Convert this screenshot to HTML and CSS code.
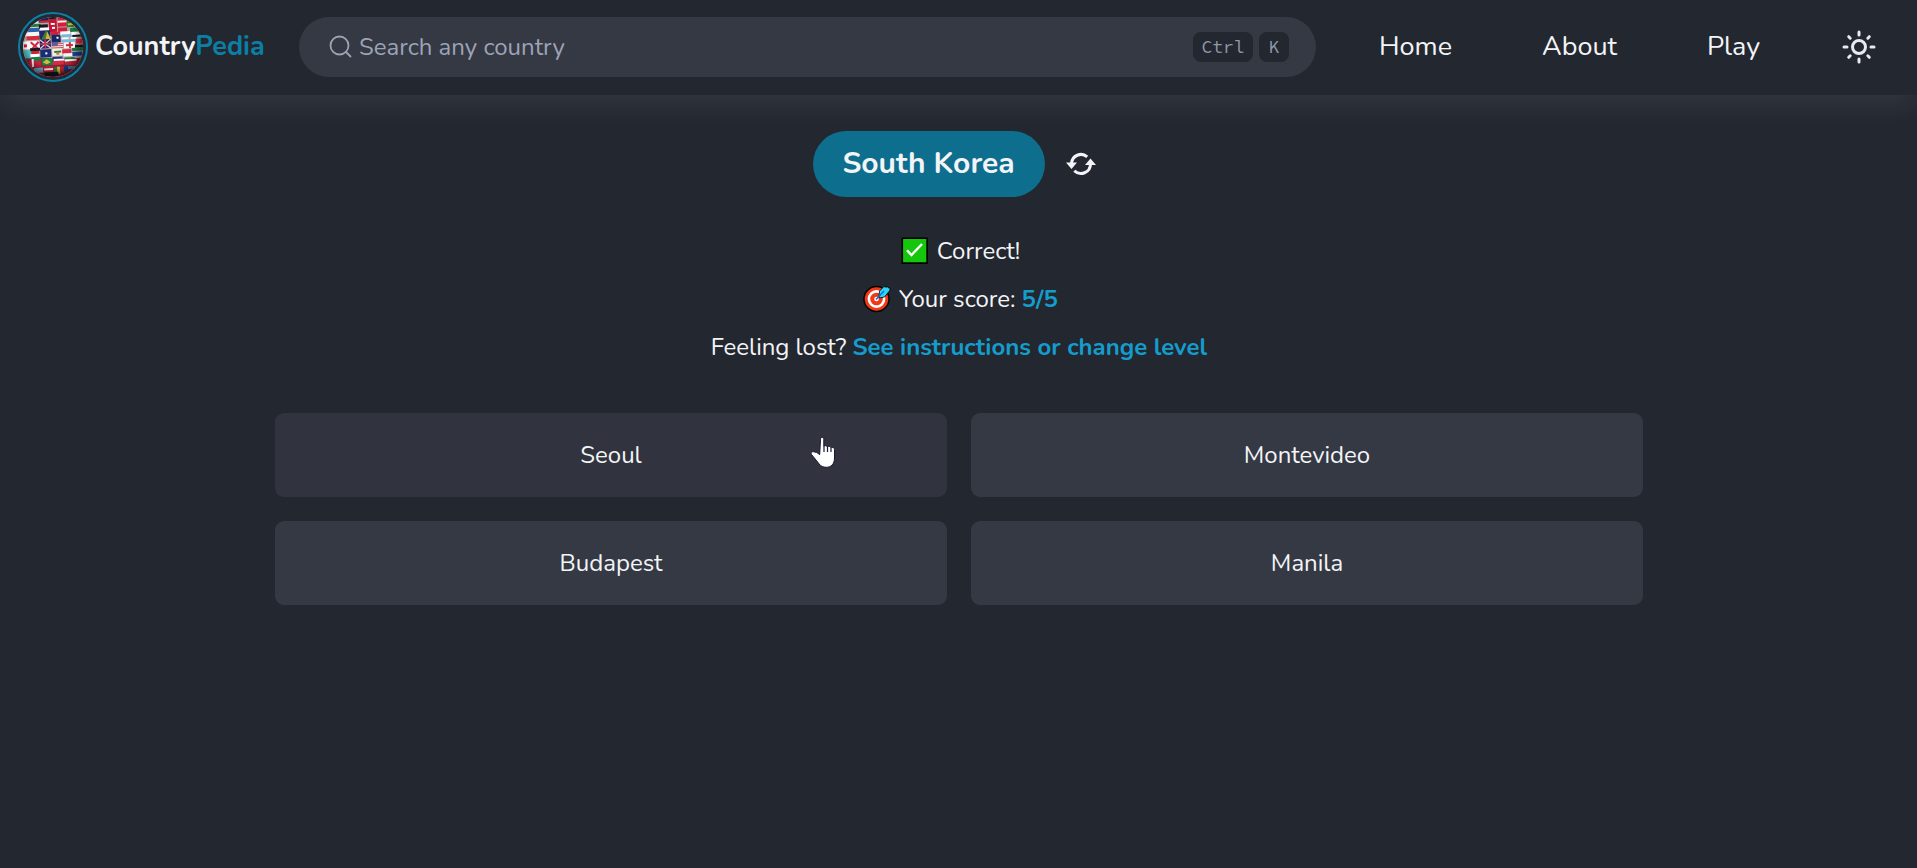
FILE: index.html
```html
<!DOCTYPE html>
<html lang="en">
<head>
<meta charset="utf-8">
<title>CountryPedia</title>
<link rel="stylesheet" href="styles.css">
</head>
<body>
<header class="header">
  <a class="brand">
    <svg class="logo" viewBox="0 0 70 70" width="70" height="70">
      <defs>
        <clipPath id="globe"><circle cx="35" cy="35" r="30"/></clipPath>
        <radialGradient id="shade" cx=".47" cy=".42" r=".56"><stop offset=".72" stop-opacity="0"/><stop offset="1" stop-opacity=".5"/></radialGradient>
      </defs>
      <g clip-path="url(#globe)">
        <path fill="#b9a7a9" d="M0 0h70v70H0z"/>
        <path fill="#8d2238" d="M0 46h70v24H0z"/>
        <g transform="rotate(-3 35 35)">
          <path fill="#dfe3d8" d="M12 7h12v8H12z"/><path fill="#287545" d="M14 11h10v3H14z"/><path fill="#172451" d="M22 5h10v5H22z"/><path fill="#d92335" d="M23 8h9v2h-9z"/>
          <path fill="#c51531" d="M32 7h8v13h-8z"/><path fill="#fff" d="M34 11h4v2h-4zM35 15h3v2h-3z"/><path fill="#151d25" d="M32 5h8v2h-8z"/>
          <path fill="#d51c3b" d="M41 6h9v9h-9z"/><path fill="#f3f3f3" d="M41 9h9v2h-9z"/><path fill="#16833d" d="M50 10h7v6h-7z"/><path fill="#e5c231" d="M51 12h5v2h-5z"/>
          <path fill="#2a63ad" d="M11 15h11v4H11z"/><path fill="#f5f5f5" d="M8 19h14v4H8z"/><path fill="#d72b39" d="M9 23h13v4H9z"/><path fill="#17191f" d="M22 12h9v4h-9z"/><path fill="#fbfbfb" d="M23 15h9v3h-9z"/>
          <path fill="#182d6c" d="M22 18h11v10H22z"/><path fill="#477838" d="m23 28 6-10 5 9z"/><path fill="#d6b337" d="m30 19 3 8h-5z"/>
          <path fill="#d31d3e" d="M33 20h8v3h-8z"/><path fill="#16275f" d="M34 23h9v8h-9z"/><path fill="#fff" d="M39 25h2v2h-2z"/>
          <path fill="#cc2038" d="M41 16h9v6h-9z"/><path fill="#f9f9f9" d="M43 20h10v4H43z"/><path fill="#79b8e0" d="M44 23h15v3H44zM44 28h15v3H44z"/><path fill="#f9f9f9" d="M44 26h15v2H44z"/><path fill="#d6b63d" d="M51 26h2v2h-2z"/>
          <path fill="#147b3b" d="M53 17h9v4h-9z"/><path fill="#fff" d="M54 21h9v3h-9z"/><path fill="#18191c" d="M55 24h9v2h-9z"/><path fill="#d92438" d="M58 28h8v5h-8z"/>
          <path fill="#f7f7f7" d="M4 28h18v8H4z"/><path fill="#c8203b" d="M6 31h3v3H6z"/><path stroke="#ce2942" stroke-width="2" d="m13 29 8 8m0-8-8 8"/>
          <path fill="#1b2566" d="M22 27h11v9H22z"/><path stroke="#d9c6d6" stroke-width="1.300" d="m22 27 11 9m0-9-11 9"/><path stroke="#d42d48" stroke-width="1.500" d="M22 31.500h11M27.500 27v9"/>
          <path fill="#eee" d="M34 31h11v6H34z"/><path stroke="#d54452" stroke-width="1" d="M34 32h11m-11 2h11m-11 2h11"/><path fill="#555f91" d="M34 30h6v4h-6z"/>
          <path fill="#f7f7f7" d="M46 31h11v6H46z"/><path fill="#c72c37" d="M48 33h7v2h-7zM51 31h2v6h-2z"/><path fill="#151a1b" d="M57 34h9v3h-9z"/><path fill="#16743b" d="M54 37h12v3H54z"/>
          <path fill="#4ac0c2" d="M6 37h7v8H6z"/><path fill="#d91c32" d="M13 38h8v3h-8z"/><path fill="#fff" d="M12 41h9v3h-9z"/><path fill="#171b1f" d="M12 35h10v3H12z"/>
          <path fill="#157f45" d="M13 44h9v4h-9z"/><path fill="#192d75" d="M22 37h11v8H22z"/><path fill="#fff" d="M27 40h2v2h-2z"/><path fill="#f3f0dc" d="M34 37h10v7H34z"/><path fill="#39743e" d="M36 39h7v2h-7z"/><path fill="#bb8245" d="M38 41h3v2h-3z"/>
          <path fill="#db2643" d="M44 38h9v4h-9z"/><path fill="#f4f4f4" d="M45 42h10v3H45z"/><path fill="#18429b" d="M54 41h10v4H54z"/>
          <path fill="#cf1e3f" d="M10 48h12v6H10z"/><path fill="#fff" d="M13 46h2v8h-2z"/><path fill="#16813d" d="M23 46h11v7H23z"/><path fill="#d4b940" d="m28 47 4 3-4 2-4-2z"/><path fill="#193889" d="M34 45h10v4H34z"/><path fill="#d72a43" d="M34 49h11v4H34z"/><path fill="#f5f5f5" d="M35 47h11v2H35z"/>
          <path fill="#14803d" d="M46 46h10v3H46z"/><path fill="#dc2138" d="M46 50h12v4H46z"/><path fill="#fff" d="M46 48h12v2H46z"/>
          <path fill="#78aecf" d="M15 55h9v5h-9z"/><path fill="#c71834" d="M24 54h10v6H24z"/><path fill="#f4f4f4" d="M25 56h9v2h-9z"/><path fill="#2e7b3a" d="M35 55h3v7h-3z"/><path fill="#e6c63e" d="M38 55h3v7h-3z"/><path fill="#d52a36" d="M41 55h4v6h-4z"/><path fill="#1a429a" d="M45 54h4v6h-4z"/><path fill="#15191c" d="M25 60h14v4H25z"/><path fill="#4b9bcf" d="M49 55h7v3h-7z"/>
        </g>
        <circle cx="35" cy="35" r="30" fill="url(#shade)"/>
      </g>
      <circle cx="35" cy="35" r="34" fill="none" stroke="#0c7fa5" stroke-width="2"/>
    </svg>
    <span class="brand-name">Country<span class="brand-accent">Pedia</span></span>
  </a>
  <div class="search">
    <svg class="search-icon" viewBox="0 0 24 24" width="24" height="24"><circle cx="10.500" cy="10.500" r="9" fill="none"/><path d="m17 17 4.500 4.500"/></svg>
    <span class="placeholder">Search any country</span>
    <kbd class="key key-ctrl">Ctrl</kbd><kbd class="key">K</kbd>
  </div>
  <nav class="nav"><a class="nav-home">Home</a><a class="nav-about">About</a><a>Play</a></nav>
  <svg class="sun" viewBox="0 0 34 34" width="34" height="34"><circle cx="17" cy="17" r="6.500"/><path d="M17 2v3M17 29v3M2 17h3M29 17h3M6.700 6.700l1.500 1.500M25.800 25.800l1.500 1.500M27.300 6.700l-1.500 1.500M8.200 25.800l-1.500 1.500"/></svg>
</header>
<main class="game">
  <div class="question">
    <h1 class="country">South Korea</h1>
    <svg class="refresh" viewBox="0 0 30 24" width="30" height="24"><path class="arc" d="M5.500 11.500A9.500 9.500 0 0 1 21.200 4.800M24.500 12A9.500 9.500 0 0 1 8.300 18.700"/><path d="M0 10.500h11l-5.500 6.500zM19 13h11l-5.500-6.500z"/></svg>
  </div>
  <div class="status">
    <p class="line line-icon"><svg class="emoji" viewBox="0 0 28 28" width="28" height="28"><path fill="#16c60c" stroke="#000" stroke-width="1.600" d="M1.300 1.300h24.800v24.800H1.300z"/><path fill="none" stroke="#fff" stroke-width="2.400" d="m6 13.200 4.500 4.800L21 7"/></svg><span>Correct!</span></p>
    <p class="line line-icon"><svg class="emoji" viewBox="0 0 28 28" width="28" height="28"><circle cx="13.500" cy="14" r="12.500" fill="#f03a17" stroke="#000" stroke-width="1.500"/><circle cx="13.500" cy="14" r="7.600" fill="none" stroke="#fff" stroke-width="2.600"/><circle cx="13.500" cy="14" r="2.300" fill="#fff"/><path fill="#31d2f7" stroke="#000" stroke-width=".8" d="m16 11 .5-5L21 1.500l2.500.8.5-1.300 1.500 2h1.500v2l-1 1.500-4.500 5.500-5 1z"/><path stroke="#0078d4" stroke-width="1.500" d="m13 14.500 8-8.500"/></svg><span>Your score:</span><b class="score">5/5</b></p>
    <p class="line"><span>Feeling lost?</span><a class="help">See instructions or change level</a></p>
  </div>
  <div class="answers">
    <button class="answer answer-active">Seoul<svg class="pointer" viewBox="0 0 26 32" width="26" height="32"><path d="M10.500 3.200c0-2.300 3.300-2.300 3.300 0v7c1-1 3-.6 3.300.5 1.200-.8 3.300-.4 3.600.8 1.400-.7 3.800-.1 3.800 2V22c0 6-3.400 9.300-8.300 9.300-3 0-5.300-1.100-7-3.300L1.700 18.700c-1.400-1.900-.2-3.300 2-2.900l3 .6 3 2.200z"/><path class="finger" d="M14 10v6M17.500 11v5M21 11.800V16"/></svg></button>
    <button class="answer">Montevideo</button>
    <button class="answer">Budapest</button>
    <button class="answer">Manila</button>
  </div>
</main>
</body>
</html>
```
FILE: styles.css
```css
* { box-sizing: border-box; }
body {
  margin: 0;
  min-height: 868px;
  background: #23272f;
  color: #f3f4f7;
  font: 24px/36px Nunito, Lato, sans-serif;
}
.header {
  display: flex;
  align-items: center;
  height: 95px;
  padding: 0 41px 1px 18px;
  background: #23272f;
  box-shadow: 0 12px 26px -2px rgba(255, 255, 255, .075);
}
.brand { display: flex; align-items: center; width: 281px; gap: 7px; }
.logo { flex: none; }
.brand-name { font-size: 27px; font-weight: 700; white-space: nowrap; }
.brand-accent { color: #0c7fa5; }
.search {
  display: flex;
  align-items: center;
  width: 1017px;
  height: 60px;
  padding: 0 27px 0 30px;
  border-radius: 30px;
  background: #343944;
  color: #9da3b4;
}
.search-icon { fill: none; stroke: #9da3b4; stroke-width: 1.8; stroke-linecap: round; }
.placeholder { flex: 1; margin-left: 6px; font-size: 24px; }
.key {
  min-width: 30px;
  height: 30px;
  border-radius: 8px;
  background: #23272f;
  color: #8f99a9;
  font: 18px/30px "Source Code Pro", "Liberation Mono", monospace;
  text-align: center;
}
.key-ctrl { width: 60px; margin-right: 6px; }
.nav { display: flex; flex: 1; font-size: 27px; padding-left: 63px; }
.nav-home { width: 163px; }
.nav-about { width: 165px; }
.sun { fill: none; stroke: #e9eaf0; stroke-width: 3; stroke-linecap: round; }
.game { padding-top: 36px; }
.question { display: flex; align-items: center; justify-content: center; gap: 21px; padding-right: 9px; }
.country {
  width: 232px;
  height: 66px;
  margin: 0;
  border-radius: 33px;
  background: #0d6e8e;
  font-size: 30px;
  line-height: 66px;
  text-align: center;
}
.refresh { fill: #f3f4f7; }
.arc { fill: none; stroke: #f3f4f7; stroke-width: 3; }
.status { display: grid; gap: 12px; margin-top: 36px; }
.line { display: flex; align-items: center; justify-content: center; height: 36px; margin: 0; padding-left: 1px; white-space: nowrap; }
.line-icon { padding-left: 4px; }
.emoji { margin-right: 8px; }
.score, .help { color: #149dcc; font-weight: 700; margin-left: 6px; }
.answers { display: grid; grid-template-columns: 672px 672px; gap: 24px; justify-content: center; margin-top: 48px; }
.answer {
  position: relative;
  height: 84px;
  padding: 0 0 0 1px;
  border: 0;
  border-radius: 9px;
  background: #343944;
  color: inherit;
  font: inherit;
}
.answer-active { background: #31343e; }
.pointer { position: absolute; left: 535px; top: 23px; fill: #fff; stroke: #181830; stroke-width: 1; }
.finger { stroke-width: 1.2; }
```
